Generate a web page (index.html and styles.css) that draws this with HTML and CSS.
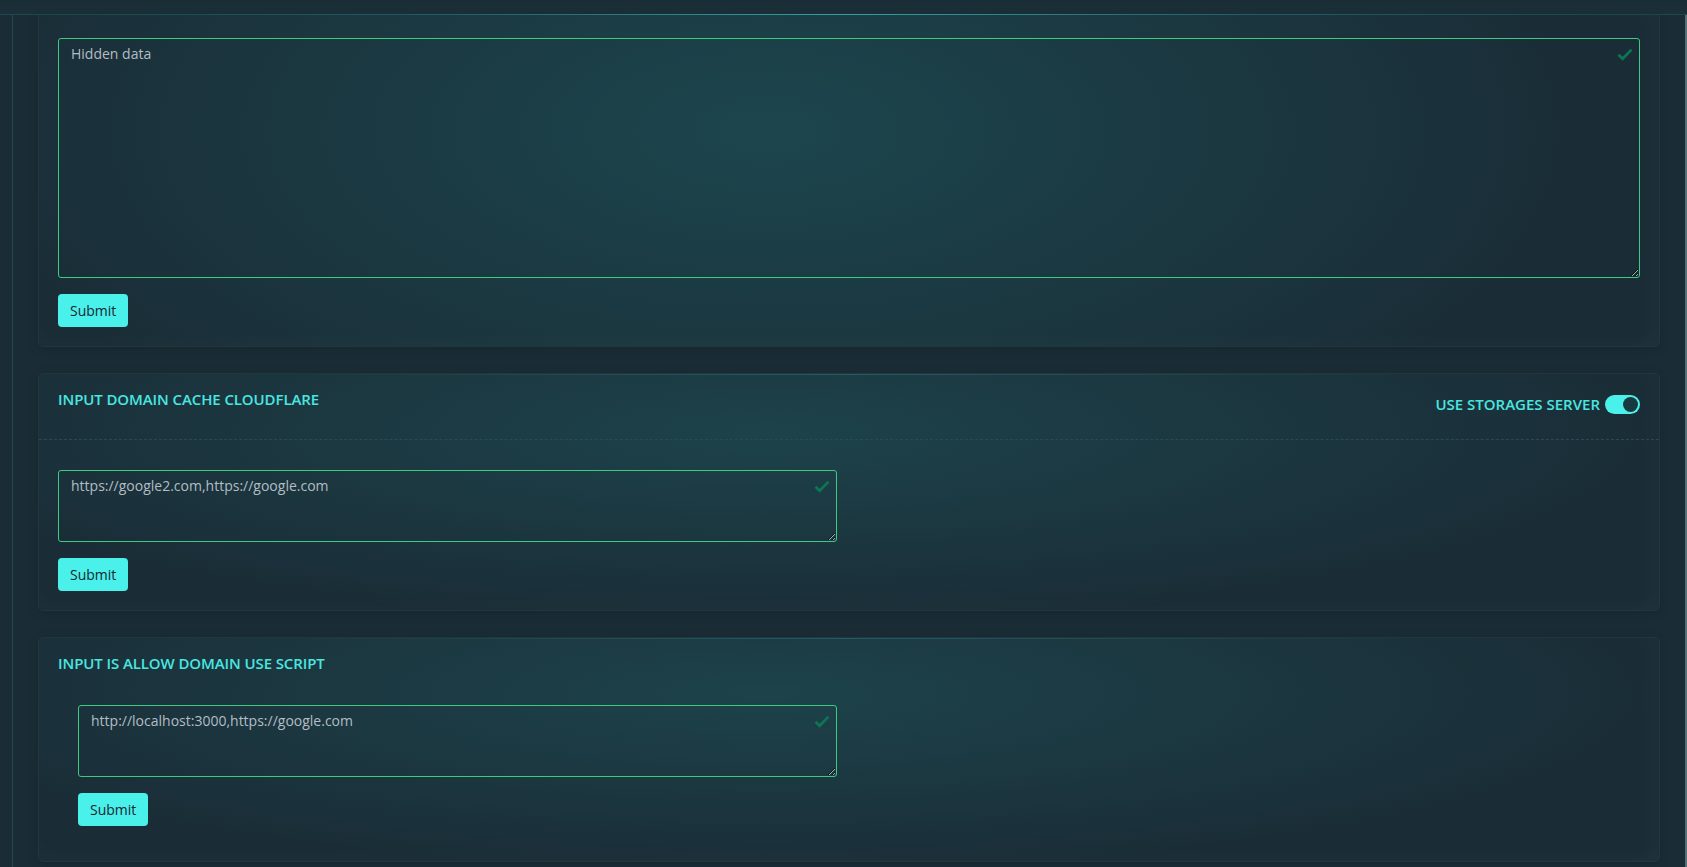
FILE: index.html
```html
<!DOCTYPE html>
<html lang="en">
<head>
<meta charset="utf-8">
<title>Settings</title>
<link rel="stylesheet" href="styles.css">
</head>
<body>
<div class="page">
  <div class="topbar"></div>
  <div class="layout">
    <aside class="rail"></aside>
    <main class="content">
      <section class="card card-first">
        <div class="card-body">
          <div class="field">
            <textarea class="input input-tall">Hidden data</textarea>
            <svg class="valid-icon" viewBox="0 0 16 13" width="16" height="13"><path d="M1.5 6.8 L5.6 10.8 L14.5 1.6" fill="none" stroke="#0d7552" stroke-width="2.8"/></svg>
          </div>
          <button class="btn" type="button">Submit</button>
        </div>
      </section>

      <section class="card">
        <header class="card-header card-header-divided">
          <h2 class="card-title">INPUT DOMAIN CACHE CLOUDFLARE</h2>
          <label class="switch-label">
            <span>USE STORAGES SERVER</span>
            <span class="switch"></span>
          </label>
        </header>
        <div class="card-body card-body-spaced">
          <div class="field field-half">
            <textarea class="input input-short">https://google2.com,https://google.com</textarea>
            <svg class="valid-icon" viewBox="0 0 16 13" width="16" height="13"><path d="M1.5 6.8 L5.6 10.8 L14.5 1.6" fill="none" stroke="#0d7552" stroke-width="2.8"/></svg>
          </div>
          <button class="btn" type="button">Submit</button>
        </div>
      </section>

      <section class="card">
        <header class="card-header card-header-plain">
          <h2 class="card-title">INPUT IS ALLOW DOMAIN USE SCRIPT</h2>
        </header>
        <div class="card-body card-body-inset">
          <div class="field field-inset">
            <textarea class="input input-short">http://localhost:3000,https://google.com</textarea>
            <svg class="valid-icon" viewBox="0 0 16 13" width="16" height="13"><path d="M1.5 6.8 L5.6 10.8 L14.5 1.6" fill="none" stroke="#0d7552" stroke-width="2.8"/></svg>
          </div>
          <button class="btn" type="button">Submit</button>
        </div>
      </section>
    </main>
    <div class="scroll-strip"></div>
  </div>
</div>
</body>
</html>
```

FILE: styles.css
```css
html, body {
  margin: 0;
  padding: 0;
  height: 100%;
  overflow: hidden;
}

body {
  background: #1a2d36;
  font-family: "Open Sans", "Noto Sans", sans-serif;
  color: #aeb8c0;
}

.page {
  display: flex;
  flex-direction: column;
  height: 867px;
}

.topbar {
  height: 15px;
  flex: none;
  background:
    linear-gradient(90deg, #1e4650 0%, #24606a 25%, #3aa8a8 50%, #24606a 75%, #1e4650 100%) left bottom / 100% 1px no-repeat,
    linear-gradient(180deg, #1a2d36, #1b3039);
}

.layout {
  flex: 1;
  display: flex;
  min-height: 0;
}

.rail {
  width: 12px;
  flex: none;
  border-right: 1px solid #1f4a53;
}

.content {
  flex: 1;
  padding: 0 25px;
  display: flex;
  flex-direction: column;
  gap: 26px;
}

.scroll-strip {
  width: 2px;
  flex: none;
  background: #cfeff0;
  opacity: 0.35;
}

.card {
  border: 1px solid #22363f;
  border-radius: 5px;
  background:
    linear-gradient(90deg, rgba(74, 200, 200, 0) 15%, rgba(74, 200, 200, 0.22) 50%, rgba(74, 200, 200, 0) 85%) left top / 100% 1px no-repeat,
    radial-gradient(ellipse 55% 80% at 45% 25%, rgba(32, 88, 94, 0.5), rgba(32, 88, 94, 0) 100%),
    #1a2d37;
  box-shadow: 0 2px 10px rgba(0, 0, 0, 0.18), inset 0 -10px 18px rgba(255, 255, 255, 0.015), inset -14px 0 18px rgba(255, 255, 255, 0.015);
}

.card-first {
  border-top: none;
  border-top-left-radius: 0;
  border-top-right-radius: 0;
  background:
    radial-gradient(ellipse 50% 110% at 45% 35%, rgba(30, 90, 96, 0.55), rgba(30, 90, 96, 0) 100%),
    #1a2d37;
}

.card-body {
  padding: 23px 19px 19px;
  display: flex;
  flex-direction: column;
  align-items: flex-start;
  gap: 16px;
}

.card-body-spaced {
  padding: 30px 19px 19px;
}

.card-body-inset {
  padding: 19px 19px 35px 39px;
}

.card-header {
  display: flex;
  justify-content: space-between;
  align-items: flex-start;
  padding: 13px 19px 0;
  box-sizing: border-box;
}

.card-header-divided {
  height: 66px;
  border-bottom: 1px dashed #2a4a53;
}

.card-header-plain {
  height: 48px;
}

.card-title {
  margin: 0;
  font-size: 15px;
  line-height: 24px;
  font-weight: 600;
  color: #4ae6e0;
  letter-spacing: -0.1px;
}

.switch-label {
  display: flex;
  align-items: center;
  gap: 5px;
  margin-top: 8px;
  font-size: 15px;
  line-height: 19px;
  font-weight: 600;
  color: #4ae6e0;
}

.switch {
  position: relative;
  width: 35px;
  height: 19px;
  border-radius: 10px;
  background: #4af0ea;
  flex: none;
}

.switch::after {
  content: "";
  position: absolute;
  top: 2px;
  right: 2px;
  width: 15px;
  height: 15px;
  border-radius: 50%;
  background: #173a40;
}

.field {
  position: relative;
  width: 100%;
}

.field-half {
  width: calc(50% - 12px);
}

.field-inset {
  width: 759px;
}

.input {
  display: block;
  box-sizing: border-box;
  width: 100%;
  margin: 0;
  padding: 5px 12px;
  border: 1px solid #3ccb80;
  border-radius: 3px;
  background: transparent;
  color: #b3bdc5;
  font-family: "Open Sans", "Noto Sans", sans-serif;
  font-size: 14px;
  line-height: 20px;
  outline: none;
}

.input-tall {
  height: 240px;
}

.input-short {
  height: 72px;
}

.valid-icon {
  position: absolute;
  top: 10px;
  right: 7px;
}

.btn {
  height: 33px;
  padding: 0 12px;
  border: none;
  border-radius: 4px;
  background: #4af0ea;
  color: #17282f;
  font-family: "Open Sans", "Noto Sans", sans-serif;
  font-size: 14px;
  cursor: pointer;
}
```
